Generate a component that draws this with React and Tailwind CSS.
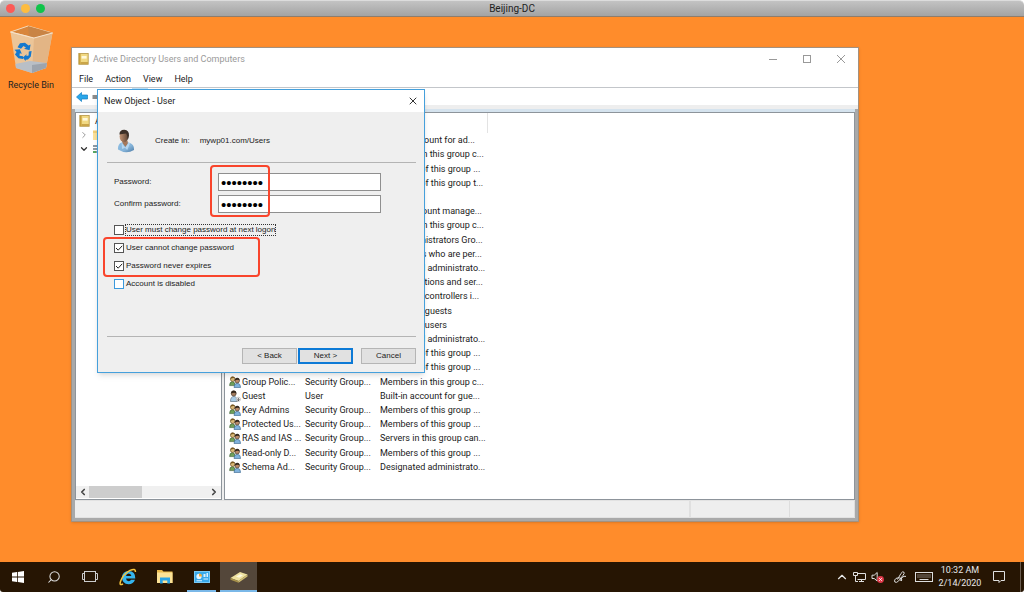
import React from "react";
import { ChevronDown, ChevronLeft, ChevronRight, ChevronUp, Search, X } from "lucide-react";

const users = [
  { description: "Built-in account for ad..." },
  { description: "Members in this group c..." },
  { description: "Members of this group ..." },
  { description: "Members of this group t..." },
  { description: "" },
  { description: "A user account manage..." },
  { description: "Members in this group c..." },
  { description: "DNS Administrators Gro..." },
  { description: "DNS clients who are per..." },
  { description: "Designated administrato..." },
  { description: "All workstations and ser..." },
  { description: "All domain controllers i..." },
  { description: "All domain guests" },
  { description: "All domain users" },
  { description: "Designated administrato..." },
  { description: "Members of this group ..." },
  { description: "Members of this group ..." },
  { name: "Group Polic...", type: "Security Group...", description: "Members in this group c..." },
  { name: "Guest", type: "User", description: "Built-in account for gue..." },
  { name: "Key Admins", type: "Security Group...", description: "Members of this group ..." },
  { name: "Protected Us...", type: "Security Group...", description: "Members of this group ..." },
  { name: "RAS and IAS ...", type: "Security Group...", description: "Servers in this group can..." },
  { name: "Read-only D...", type: "Security Group...", description: "Members of this group ..." },
  { name: "Schema Ad...", type: "Security Group...", description: "Designated administrato..." },
];

const options = [
  { id: "must-change", label: "User must change password at next logon", focused: true },
  { id: "cannot-change", label: "User cannot change password", checked: true },
  { id: "never-expires", label: "Password never expires", checked: true },
  { id: "disabled", label: "Account is disabled", hot: true },
];

const GroupIcon = () => (
  <svg viewBox="0 0 12 12" className="w-3 h-3 shrink-0">
    <path d="M0.6 9.6Q0.5 5.8 3.4 5.6Q6 5.8 6 9.6Z" fill="#6fa05a" stroke="#3c5c34" strokeWidth="0.6" />
    <circle cx="3.7" cy="3.2" r="2.3" fill="#d9b877" stroke="#5d4522" strokeWidth="0.6" />
    <path d="M1.4 3Q1.4 0.6 3.7 0.6Q5.6 0.6 6 2.2Q3.4 1.6 1.4 3Z" fill="#7a5a22" />
    <path d="M5 11.5Q4.9 7.4 8.3 7.2Q11.6 7.4 11.6 11.5Z" fill="#7fb2dc" stroke="#35638c" strokeWidth="0.6" />
    <circle cx="8.2" cy="4.7" r="2.3" fill="#b98a68" stroke="#3b2b20" strokeWidth="0.6" />
    <path d="M5.9 4.6Q5.7 1.8 8.2 1.8Q10.7 1.9 10.5 4.6Q9 3 5.9 4.6Z" fill="#35291f" />
  </svg>
);

const GuestIcon = () => (
  <svg viewBox="0 0 12 12" className="w-3 h-3 shrink-0">
    <path d="M1.5 11.5Q1.4 6.6 4.9 6.4Q8.3 6.7 8.3 11.5Z" fill="#a8cbe6" stroke="#4a5f70" strokeWidth="0.6" />
    <circle cx="4.7" cy="3.5" r="2.5" fill="#a27a5c" stroke="#33261b" strokeWidth="0.5" />
    <path d="M2.1 3.6Q1.9 0.5 4.7 0.5Q7.5 0.6 7.2 3.6Q5.5 1.8 2.1 3.6Z" fill="#33261b" />
    <circle cx="9.3" cy="9.3" r="2.2" fill="#fff" stroke="#999" strokeWidth="0.5" />
    <path d="M9.3 7.9V10.6M8.1 9.4L9.3 10.7L10.5 9.4" fill="none" stroke="#333" strokeWidth="0.8" />
  </svg>
);

const PersonIcon = () => (
  <svg viewBox="0 0 18 24" className="w-[18px] h-6 shrink-0">
    <defs>
      <linearGradient id="shirt" x1="0" y1="0" x2="1" y2="1">
        <stop offset="0" stopColor="#8fc0e6" />
        <stop offset="0.6" stopColor="#86b4d9" />
        <stop offset="1" stopColor="#4b7aa5" />
      </linearGradient>
      <linearGradient id="skin" x1="0" y1="0" x2="1" y2="0">
        <stop offset="0" stopColor="#c39373" />
        <stop offset="1" stopColor="#5e4535" />
      </linearGradient>
    </defs>
    <path d="M1 20.5Q0.6 14.8 4.6 13.4L8.5 12.6L13 14Q17.3 15.6 17 21Q9 25.6 1 20.5Z" fill="url(#shirt)" />
    <path d="M5 12L5.8 14.6L8.5 18L10.8 15L10.6 11.5Z" fill="#a5795c" />
    <path d="M4.6 13.4L8.2 18.6L11.6 13.6L13 14.4L10.2 21L8 18.8L5 20Z" fill="#b5d6f0" />
    <ellipse cx="6.9" cy="7.4" rx="4.3" ry="5.9" fill="url(#skin)" />
    <path d="M2.4 5.4Q2.6 0.6 7.4 0.8Q12.3 1.2 12 6.6Q11.6 10 10.6 11Q10.7 6.6 9.2 4.6Q5 5.3 2.4 5.4Z" fill="#3c2f27" />
  </svg>
);

const BookIcon = () => (
  <svg viewBox="0 0 11 12" className="w-[11px] h-3 shrink-0">
    <rect x="0.8" y="0.5" width="9.4" height="10.8" fill="#f1d983" stroke="#b59545" strokeWidth="0.8" />
    <rect x="1" y="0.8" width="1.6" height="10.2" fill="#c7a03b" />
    <rect x="3.6" y="3" width="5" height="2.6" fill="#fff9dc" />
    <rect x="2.6" y="9" width="7.4" height="2" fill="#caa548" />
  </svg>
);

const RecycleBin = () => (
  <svg viewBox="0 0 46 50" className="w-[46px] h-[50px]">
    <path d="M2.5 7L20 1L44.5 8L38 43L24 48L8 43Z" fill="#ecc598" />
    <path d="M2.5 7L20 1L44.5 8L26 13Z" fill="#d8863c" stroke="#f3d8b8" strokeWidth="1" />
    <path d="M20 1L21 11.5L26 13L44.5 8Z" fill="#c98445" />
    <path d="M26 13L44.5 8L38 43L24 48Z" fill="#e3b585" />
    <path d="M7.4 39L22 36L39 38L38 43L24 48L8 43Z" fill="#b9bfc6" />
    <path d="M24 40L39 38L38 43L24 48Z" fill="#9da4ad" />
    <path d="M2.5 7L26 13L44.5 8" fill="none" stroke="#f7e3cb" strokeWidth="1" />
    <g fill="#1479cf" transform="translate(0 1.5) scale(1 0.86)">
      <path d="M9.5 24L12 19.5L17 19L20.5 22L22.6 21L21.6 27.5L16 26L18 24.6L15.5 22.8L13 26Z" />
      <path d="M6.5 27L11.8 26.5L13.8 31.8L11.8 31.2L11.5 34L15 34.5L15 37.8L10.4 37L7 32.6L8.6 29.6Z" />
      <path d="M20.8 29L23.6 28.6L22.8 35L20 38.4L17.6 38.8L17.6 40.4L14.8 36L18.6 32.4L18.4 34.2L20.6 33.6Z" />
    </g>
  </svg>
);

const Highlight = ({ className }) => (
  <div className={`absolute border-2 border-[#f9452c] rounded-[4px] pointer-events-none ${className}`} />
);

const MacTitleBar = () => (
  <div className="relative z-10 h-[17px] shrink-0 bg-linear-to-b from-[#c3c3c3] to-[#a3a3a3] border-t border-t-[#dcdcdc] border-b border-b-[#8f7d6c] rounded-t-[5px] flex items-center px-[6px]">
    <div className="flex-1 flex gap-[6px]">
      <button aria-label="Close" className="w-[9px] h-[9px] rounded-full bg-[#fc5b57]" />
      <button aria-label="Minimize" className="w-[9px] h-[9px] rounded-full bg-[#fdbc40]" />
      <button aria-label="Zoom" className="w-[9px] h-[9px] rounded-full bg-[#0fc44a]" />
    </div>
    <h1 className="text-[10px] leading-3 text-[#222]">Beijing-DC</h1>
    <div className="flex-1" />
  </div>
);

const TreePane = () => (
  <div className="w-[147px] shrink-0 bg-white border border-[#8d949b] flex flex-col">
    <ul className="flex-1 pt-px pl-[3px] text-[#1a1a1a]">
      <li className="flex items-center gap-[5px] h-[14px]">
        <BookIcon />A
      </li>
      <li className="flex items-center gap-1 h-[14px]">
        <ChevronRight className="w-[10px] h-[10px] text-[#888]" />
        <svg viewBox="0 0 10 10" className="w-[10px] h-[10px]">
          <path d="M0 0.5H4L5 2H10V10H0Z" fill="#f2cf77" />
          <path d="M0 3H10V10H0Z" fill="#fbe19a" />
        </svg>
      </li>
      <li className="flex items-center gap-1 h-[14px]">
        <ChevronDown className="w-[10px] h-[10px] text-[#333]" strokeWidth={3} />
        <svg viewBox="0 0 10 10" className="w-[10px] h-[10px]">
          <path d="M0 1H9V3H0ZM0 4H9V6H0ZM0 7H9V9H0Z" fill="#8d9aa5" />
          <path d="M0 7H3V9H0Z" fill="#5aa763" />
        </svg>
      </li>
    </ul>
    <div className="h-3 mb-px bg-[#f0f0f0] flex items-center px-[2px]">
      <button aria-label="Scroll left">
        <ChevronLeft className="w-[10px] h-[10px] text-[#444]" strokeWidth={4} />
      </button>
      <div className="flex-1 flex pl-px">
        <div className="w-[53px] h-3 bg-[#cdcdcd]" />
      </div>
      <button aria-label="Scroll right">
        <ChevronRight className="w-[10px] h-[10px] text-[#444]" strokeWidth={4} />
      </button>
    </div>
  </div>
);

const UserList = () => (
  <div className="flex-1 bg-white border border-[#8d949b] pl-1">
    <table className="table-fixed w-[259px] h-[361px] text-[#1a1a1a]">
      <colgroup>
        <col className="w-[76px]" />
        <col className="w-[75px]" />
        <col />
      </colgroup>
      <thead>
        <tr className="h-5">
          <th colSpan={3} className="p-0 border-r border-[#e3e3e3]" />
        </tr>
      </thead>
      <tbody>
        {users.map(({ name, type, description }, index) => (
          <tr key={index} className="h-[14px] whitespace-nowrap">
            <td className="p-0">
              {name && (
                <div className="flex items-center gap-px h-3">
                  {type === "User" ? <GuestIcon /> : <GroupIcon />}
                  {name}
                </div>
              )}
            </td>
            <td className="p-0">{type}</td>
            <td className="p-0">{description}</td>
          </tr>
        ))}
      </tbody>
    </table>
  </div>
);

const DirectoryWindow = () => (
  <section className="absolute left-[71px] top-[34px] w-[788px] h-[475px] bg-white border border-[#a3917f] flex flex-col text-[9px] leading-3 shadow-sm">
    <header className="h-[22px] flex items-center pl-[6px] text-[#9a9a9a]">
      <BookIcon />
      <h2 className="ml-1 flex-1">Active Directory Users and Computers</h2>
      <div className="flex gap-6 pr-3">
        <button aria-label="Minimize">
          <svg viewBox="0 0 10 10" className="w-[10px] h-[10px]">
            <path d="M1 5.5H9" stroke="#999" />
          </svg>
        </button>
        <button aria-label="Maximize">
          <svg viewBox="0 0 10 10" className="w-[10px] h-[10px]">
            <rect x="1.5" y="1.5" width="7" height="7" fill="none" stroke="#999" />
          </svg>
        </button>
        <button aria-label="Close">
          <svg viewBox="0 0 10 10" className="w-[10px] h-[10px]">
            <path d="M1 1L9 9M9 1L1 9" stroke="#999" />
          </svg>
        </button>
      </div>
    </header>
    <nav className="h-[18px] flex items-center gap-3 pl-[7px] border-b border-[#c3c6ca] text-[#1a1a1a]">
      <button>File</button>
      <button>Action</button>
      <button>View</button>
      <button>Help</button>
    </nav>
    <div className="h-[17px] flex items-center gap-1 pl-1">
      <button aria-label="Back">
        <svg viewBox="0 0 12 10" className="w-3 h-[10px]">
          <path d="M0.5 5L5.5 0.5V3H11.5V7H5.5V9.5Z" fill="#29a7ea" stroke="#1580c4" strokeWidth="0.7" />
        </svg>
      </button>
      <button aria-label="Forward">
        <svg viewBox="0 0 12 10" className="w-3 h-[10px]">
          <path d="M11.5 5L6.5 0.5V3H0.5V7H6.5V9.5Z" fill="#8c8c8c" />
        </svg>
      </button>
      <button aria-label="Show console tree" className="ml-6 w-4 h-full bg-[#b9dff8]" />
    </div>
    <div className="h-1 bg-[#eeeeee]" />
    <div className="flex-1 flex flex-col bg-[#a9a9a9] px-[3px] pb-[3px]">
      <div className="h-[3px] bg-[#d5e3ee]" />
      <div className="flex-1 flex gap-[2px] bg-[#eeeeee]">
        <TreePane />
        <UserList />
      </div>
      <footer className="h-[18px] bg-[#eeeeee] border-y border-[#e2e2e2] flex justify-end">
        <div className="w-[100px] border-l-2 border-[#e0e0e0]" />
        <div className="w-[66px] border-l border-r border-[#dddddd]" />
      </footer>
    </div>
  </section>
);

const NewUserDialog = () => (
  <form
    className="absolute left-[97px] top-[76px] w-[328px] h-[284px] bg-[#efefef] border border-[#45a0dc] flex flex-col font-['Liberation_Sans',sans-serif] text-[8px] leading-3 text-[#222] shadow-md"
    onSubmit={(e) => e.preventDefault()}
  >
    <header className="h-[22px] bg-white flex items-center justify-between pl-[6px] pr-[5px] font-[Roboto,sans-serif] text-[9px]">
      <h2>New Object - User</h2>
      <button type="button" aria-label="Close">
        <X className="w-3 h-3 text-[#333]" strokeWidth={2} />
      </button>
    </header>

    <div className="flex-1 flex flex-col pl-[9px] pr-2 pb-2">
      <div className="h-[51px] flex items-center pl-[10px] pt-2 border-b border-[#b4b4b4]">
        <PersonIcon />
        <span className="ml-5">Create in:</span>
        <span className="ml-[10px]">mywp01.com/Users</span>
      </div>

      <div className="relative mt-[10px] mx-[7px] grid grid-cols-[104px_163px] items-center gap-y-1">
        <label htmlFor="password">Password:</label>
        <input
          id="password"
          type="password"
          defaultValue="12345678"
          className="h-[18px] bg-white border border-[#8f8f8f] px-[2px] text-[15px] leading-4 text-black outline-none"
        />
        <label htmlFor="confirm">Confirm password:</label>
        <input
          id="confirm"
          type="password"
          defaultValue="12345678"
          className="h-[18px] bg-white border border-[#8f8f8f] px-[2px] text-[15px] leading-4 text-black outline-none"
        />
        <Highlight className="left-24 -top-2 w-[60px] h-[52px]" />
      </div>

      <div className="relative mt-2 mx-[7px]">
        {options.map((option) => (
          <div key={option.id} className="h-[18px] flex items-center gap-[2px]">
            <span className="relative flex">
              <input
                id={option.id}
                type="checkbox"
                defaultChecked={option.checked}
                className={`peer appearance-none w-[10px] h-[10px] bg-white border ${
                  option.hot ? "border-[#3b99dd]" : "border-[#555]"
                }`}
              />
              <svg viewBox="0 0 10 10" className="absolute inset-0 hidden peer-checked:block pointer-events-none">
                <path d="M2 5L4.2 7.2L8.2 2.8" fill="none" stroke="#222" />
              </svg>
            </span>
            <label
              htmlFor={option.id}
              className={option.focused ? "leading-[10px] outline outline-dotted outline-[#333]" : ""}
            >
              {option.label}
            </label>
          </div>
        ))}
        <Highlight className="-left-[11px] top-4 w-[157px] h-10" />
      </div>

      <div className="flex-1 border-b border-[#b4b4b4]" />

      <div className="mt-[11px] flex justify-end">
        <button type="button" className="w-[55px] h-4 bg-[#e1e1e1] border border-[#b5b5b5]">
          &lt; Back
        </button>
        <button type="submit" className="ml-px w-[55px] h-4 bg-[#e1e1e1] border-2 border-[#0d7ad6] leading-3">
          Next &gt;
        </button>
        <button type="button" className="ml-2 w-[55px] h-4 bg-[#e1e1e1] border border-[#b5b5b5]">
          Cancel
        </button>
      </div>
    </div>
  </form>
);

const TaskButton = ({ label, className = "", children }) => (
  <button aria-label={label} className={`w-[37px] h-[30px] flex items-center justify-center ${className}`}>
    {children}
  </button>
);

const Taskbar = () => (
  <footer className="h-[30px] shrink-0 bg-[#261503] rounded-b-[3px] flex items-center justify-between text-white">
    <div className="flex">
      <div className="flex pr-px">
        <button aria-label="Start" className="w-9 flex items-center justify-center">
          <svg viewBox="0 0 14 14" className="w-[14px] h-[14px]">
            <path d="M1 2.8L6 2.1V6.6H1ZM6.8 2L13 1V6.6H6.8ZM1 7.4H6V11.9L1 11.2ZM6.8 7.4H13V13L6.8 12Z" fill="#fff" />
          </svg>
        </button>
        <button aria-label="Search" className="w-9 flex items-center justify-center">
          <Search className="w-[14px] h-[14px] -scale-x-100 text-[#ddd]" strokeWidth={1.8} />
        </button>
        <button aria-label="Task view" className="w-9 flex items-center justify-center">
          <svg viewBox="0 0 16 14" className="w-4 h-[14px]" fill="none" stroke="#ccc">
            <rect x="2.5" y="1.5" width="11" height="10" />
            <path d="M2 3.5H0.5V9.5H2M14 3.5H15.5V9.5H14" />
          </svg>
        </button>
      </div>
      <TaskButton label="Internet Explorer">
        <svg viewBox="0 0 18 18" className="w-[18px] h-[18px]">
          <path
            d="M16 11.8Q14.4 16.2 9.6 16.2Q3 15.8 3 9.4Q3.4 3 9.6 2.9Q16.6 3.2 16.3 10.5H7Q7.2 13.1 9.8 13.2Q11.3 13.1 12 11.8ZM7 7.9H12.4Q12 5.7 9.8 5.6Q7.4 5.7 7 7.9Z"
            fill="#35b5ee"
            fillRule="evenodd"
          />
          <path d="M4 15.8Q0.2 18 1.4 13.8Q4 6.2 11 2.4Q16.8-0.2 16.4 4" fill="none" stroke="#f5c43c" strokeWidth="1.5" />
        </svg>
      </TaskButton>
      <TaskButton label="File Explorer">
        <svg viewBox="0 0 18 16" className="w-[18px] h-4">
          <path d="M1 1H6L7.5 2.5H16.5V14H1Z" fill="#e9b94d" />
          <path d="M1 3.5H16.5V14H1Z" fill="#fbe297" />
          <path d="M4 14.5V8.5H14V14.5H11.3V11.5H6.7V14.5Z" fill="#2aa4e6" />
        </svg>
      </TaskButton>
      <TaskButton label="Server Manager" className="relative">
        <svg viewBox="0 0 16 12" className="w-4 h-3">
          <rect width="16" height="12" fill="#38a9ea" />
          <rect x="0.5" y="0.5" width="15" height="11" fill="none" stroke="#78c9f5" />
          <circle cx="5" cy="5.4" r="2.6" fill="#e9f6ff" />
          <path d="M5 5.4V2.4A3 3 0 0 1 8 5.4Z" fill="#f4a935" />
          <path d="M9.5 3H11.5V6H9.5ZM12.5 2H14V6H12.5ZM9.5 7.5H14V8.5H9.5ZM2.5 9.3H8V10.2H2.5Z" fill="#d9f0ff" />
        </svg>
        <span className="absolute bottom-0 inset-x-1 h-[2px] bg-[#7ab8e8]" />
      </TaskButton>
      <TaskButton label="Active Directory" className="relative bg-[#54473a]">
        <svg viewBox="0 0 18 12" className="w-[18px] h-3">
          <path d="M0.5 7L10 1L17.5 3.5L8.5 10Z" fill="#efe2a0" />
          <path d="M0.5 7L8.5 10V11.8L0.5 8.8Z" fill="#a8924a" />
          <path d="M8.5 10L17.5 3.5V5.5L8.5 11.8Z" fill="#d0bd72" />
          <path d="M6 5.6L10 3.2L13 4.2L9.2 6.8Z" fill="#fffbe0" />
        </svg>
        <span className="absolute bottom-0 inset-x-0 h-[2px] bg-[#7ab8e8]" />
      </TaskButton>
    </div>

    <div className="flex items-center text-[#e8e8e8]">
      <button aria-label="Show hidden icons">
        <ChevronUp className="w-[14px] h-[14px]" strokeWidth={2} />
      </button>
      <svg viewBox="0 0 14 12" className="ml-1 w-[14px] h-3" fill="none" stroke="#e0e0e0">
        <path d="M4.5 2.5H12.5V8.5H4.5M8.5 8.5V10.5M6 10.5H11M2.5 5V10.5H5M0.5 1.5H4.5V4.5H0.5Z" />
      </svg>
      <svg viewBox="0 0 14 14" className="ml-1 w-[14px] h-[14px]">
        <path d="M1 5.2H3.2L6.2 2.5V11L3.2 8.5H1Z" fill="none" stroke="#ddd" />
        <circle cx="9.5" cy="9.5" r="3.4" fill="#e03a4a" />
        <path d="M8.2 8.2L10.8 10.8M10.8 8.2L8.2 10.8" stroke="#fff" strokeWidth="0.9" />
      </svg>
      <svg viewBox="0 0 14 14" className="ml-2 w-[14px] h-[14px]" fill="none" stroke="#ddd">
        <path d="M4.5 9.5L8 3.4Q9.6 1 11 2.2Q11.8 3.2 9.8 5.6L5.6 11Q3.4 13.2 1.8 12Q0.8 10 3 8.4Q6 7 8 8.4Q10 10.4 8 11Q6.8 10.6 9 7.6Q11 5.6 13 6.4" />
      </svg>
      <svg viewBox="0 0 18 12" className="ml-2 w-[18px] h-3" fill="none" stroke="#ddd">
        <rect x="0.5" y="1.5" width="17" height="9" />
        <path d="M2.5 4H16M2.5 6H16" strokeDasharray="1 1" />
        <path d="M4.5 8.5H13.5" />
      </svg>
      <div className="w-[54px] text-center text-[9px] leading-[13px]">
        <div>10:32 AM</div>
        <div>2/14/2020</div>
      </div>
      <button aria-label="Notifications" className="ml-[5px]">
        <svg viewBox="0 0 14 14" className="w-[14px] h-[14px]" fill="none" stroke="#e0e0e0">
          <path d="M1.5 1.5H12.5V10.5H9L7 12.5V10.5H1.5Z" />
        </svg>
      </button>
      <div className="ml-[14px] mr-[3px] w-px h-[30px] bg-[#6b5d50]" />
    </div>
  </footer>
);

const App = () => {
  return (
    <div className="min-h-screen flex flex-col bg-white font-[Roboto,sans-serif]">
      <MacTitleBar />
      <main className="relative flex-1 -mt-1 pt-1 bg-[#ff8c2b]">
        <div className="flex flex-col items-start px-2 pt-2">
          <div className="flex flex-col items-center gap-1">
            <RecycleBin />
            <span className="text-[9px] leading-3 text-[#222]">Recycle Bin</span>
          </div>
        </div>
        <DirectoryWindow />
        <NewUserDialog />
      </main>
      <Taskbar />
    </div>
  );
};

export default App;
